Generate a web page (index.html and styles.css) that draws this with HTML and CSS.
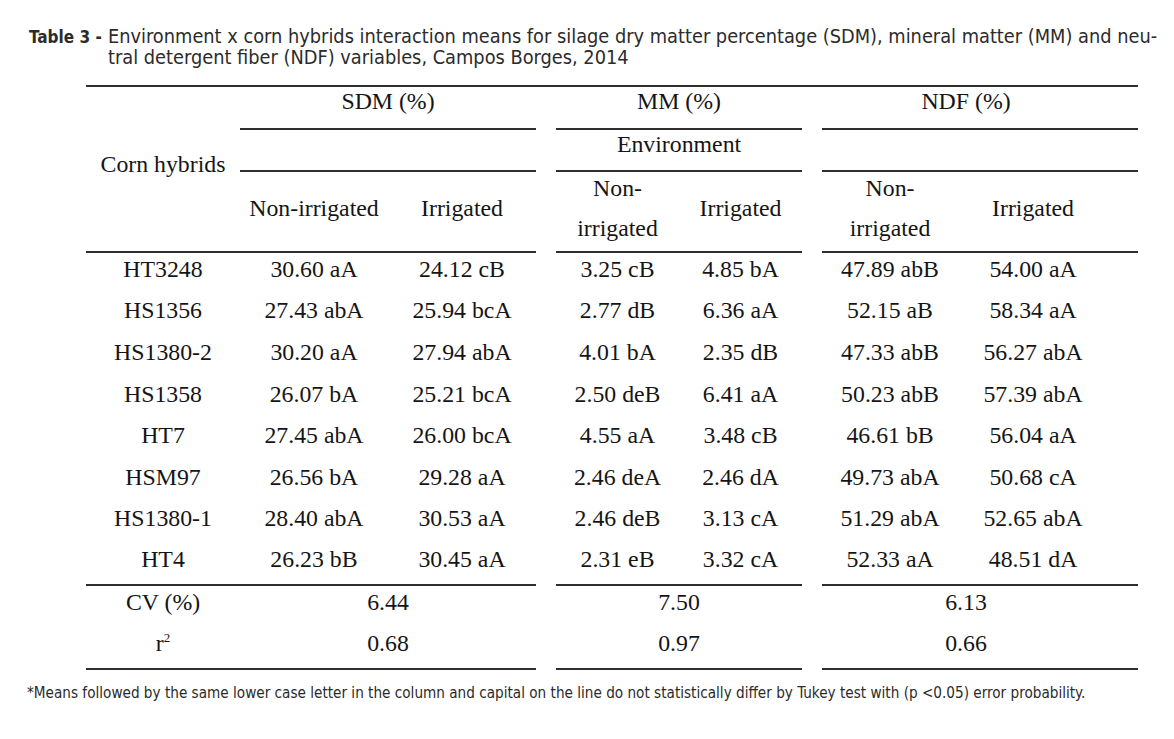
FILE: index.html
```html
<!DOCTYPE html>
<html lang="en">
<head>
<meta charset="utf-8">
<title>Table 3</title>
<link rel="stylesheet" href="styles.css">
</head>
<body>
<div class="caption">
  <span class="cap-label">Table 3 -</span>
  <span class="cap-text">Environment x corn hybrids interaction means for silage dry matter percentage (SDM), mineral matter (MM) and neu-<br>tral detergent fiber (NDF) variables, Campos Borges, 2014</span>
</div>
<table class="data">
  <colgroup>
    <col class="c-name"><col class="c-sdm"><col class="c-sdm"><col class="c-gap"><col class="c-mm"><col class="c-mm"><col class="c-gap"><col class="c-ndf1"><col class="c-ndf2">
  </colgroup>
  <thead>
    <tr class="h1">
      <th rowspan="3" class="name bb">Corn hybrids</th>
      <th colspan="2" class="bb">SDM (%)</th>
      <th class="gap"></th>
      <th colspan="2" class="bb">MM (%)</th>
      <th class="gap"></th>
      <th colspan="2" class="bb ndf">NDF (%)</th>
    </tr>
    <tr class="h2">
      <th colspan="2" class="bb"></th>
      <th class="gap"></th>
      <th colspan="2" class="bb">Environment</th>
      <th class="gap"></th>
      <th colspan="2" class="bb"></th>
    </tr>
    <tr class="h3">
      <th class="bb">Non-irrigated</th>
      <th class="bb">Irrigated</th>
      <th class="gap"></th>
      <th class="bb two"><span class="l1">Non-</span><span class="l2">irrigated</span></th>
      <th class="bb">Irrigated</th>
      <th class="gap"></th>
      <th class="bb two"><span class="l1">Non-</span><span class="l2">irrigated</span></th>
      <th class="bb shift">Irrigated</th>
    </tr>
  </thead>
  <tbody>
    <tr><td>HT3248</td><td>30.60 aA</td><td>24.12 cB</td><td class="gap"></td><td>3.25 cB</td><td>4.85 bA</td><td class="gap"></td><td>47.89 abB</td><td class="shift">54.00 aA</td></tr>
    <tr><td>HS1356</td><td>27.43 abA</td><td>25.94 bcA</td><td class="gap"></td><td>2.77 dB</td><td>6.36 aA</td><td class="gap"></td><td>52.15 aB</td><td class="shift">58.34 aA</td></tr>
    <tr><td>HS1380-2</td><td>30.20 aA</td><td>27.94 abA</td><td class="gap"></td><td>4.01 bA</td><td>2.35 dB</td><td class="gap"></td><td>47.33 abB</td><td class="shift">56.27 abA</td></tr>
    <tr><td>HS1358</td><td>26.07 bA</td><td>25.21 bcA</td><td class="gap"></td><td>2.50 deB</td><td>6.41 aA</td><td class="gap"></td><td>50.23 abB</td><td class="shift">57.39 abA</td></tr>
    <tr><td>HT7</td><td>27.45 abA</td><td>26.00 bcA</td><td class="gap"></td><td>4.55 aA</td><td>3.48 cB</td><td class="gap"></td><td>46.61 bB</td><td class="shift">56.04 aA</td></tr>
    <tr><td>HSM97</td><td>26.56 bA</td><td>29.28 aA</td><td class="gap"></td><td>2.46 deA</td><td>2.46 dA</td><td class="gap"></td><td>49.73 abA</td><td class="shift">50.68 cA</td></tr>
    <tr><td>HS1380-1</td><td>28.40 abA</td><td>30.53 aA</td><td class="gap"></td><td>2.46 deB</td><td>3.13 cA</td><td class="gap"></td><td>51.29 abA</td><td class="shift">52.65 abA</td></tr>
    <tr class="last"><td class="bb">HT4</td><td class="bb">26.23 bB</td><td class="bb">30.45 aA</td><td class="gap"></td><td class="bb">2.31 eB</td><td class="bb">3.32 cA</td><td class="gap"></td><td class="bb">52.33 aA</td><td class="bb shift">48.51 dA</td></tr>
  </tbody>
  <tfoot>
    <tr class="f1"><td>CV (%)</td><td colspan="2">6.44</td><td class="gap"></td><td colspan="2">7.50</td><td class="gap"></td><td colspan="2" class="ndf">6.13</td></tr>
    <tr class="f2"><td class="bb">r<sup>2</sup></td><td colspan="2" class="bb">0.68</td><td class="gap"></td><td colspan="2" class="bb">0.97</td><td class="gap"></td><td colspan="2" class="bb ndf">0.66</td></tr>
  </tfoot>
</table>
<p class="note">*Means followed by the same lower case letter in the column and capital on the line do not statistically differ by Tukey test with (p &lt;0.05) error probability.</p>
</body>
</html>
```

FILE: styles.css
```css
html, body {
  margin: 0;
  padding: 0;
  background: #ffffff;
}

body {
  width: 1174px;
  height: 739px;
  overflow: hidden;
}

.caption {
  display: flex;
  align-items: baseline;
  padding: 26px 0 0 29px;
  font-family: "DejaVu Sans Condensed", "DejaVu Sans", sans-serif;
  font-stretch: condensed;
  font-size: 19.8px;
  line-height: 21px;
  color: #2b2b2b;
}

.cap-label {
  font-weight: bold;
  font-size: 17px;
  flex: 0 0 auto;
  width: 79px;
  white-space: nowrap;
}

.cap-text {
  flex: 1 1 auto;
  white-space: nowrap;
}

.data {
  margin: 17px 0 0 86px;
  width: 1052px;
  table-layout: fixed;
  border-collapse: collapse;
  font-family: "Liberation Serif", "Times New Roman", serif;
  font-size: 23.8px;
  color: #151515;
}

.c-name { width: 154px; }
.c-sdm { width: 148px; }
.c-gap { width: 20px; }
.c-mm { width: 123px; }
.c-ndf1 { width: 136px; }
.c-ndf2 { width: 180px; }

.data th,
.data td {
  font-weight: normal;
  text-align: center;
  vertical-align: middle;
  padding: 0 0 8px 0;
  line-height: 28px;
  white-space: nowrap;
}

.data .h1 th {
  border-top: 2px solid #2e2e2e;
}

.data .bb {
  border-bottom: 2px solid #2e2e2e;
}

.data .h1 { height: 42px; }
.data .h2 { height: 42px; }
.data .h3 { height: 79px; }
.data tbody tr { height: 41.6px; }
.data .f1 { height: 41px; }
.data .f2 { height: 43px; }

.data .h1 th { padding-bottom: 13px; }
.data .h2 th { padding-bottom: 12px; }

.data .h1 th.name {
  padding-bottom: 10px;
  padding-top: 0;
}

.data .two {
  padding-bottom: 7px;
  vertical-align: top;
}

.data .two .l1,
.data .two .l2 {
  display: block;
  line-height: 32px;
}

.data .two .l2 {
  margin-top: 8px;
}

.data .shift {
  padding-right: 30px;
}

.data .ndf {
  padding-right: 28px;
}

.data sup {
  font-size: 13px;
  line-height: 0;
  vertical-align: 9px;
}

.note {
  margin: 14px 0 0 27px;
  font-family: "DejaVu Sans Condensed", "DejaVu Sans", sans-serif;
  font-stretch: condensed;
  font-size: 15.15px;
  line-height: 18px;
  color: #2b2b2b;
}
```
